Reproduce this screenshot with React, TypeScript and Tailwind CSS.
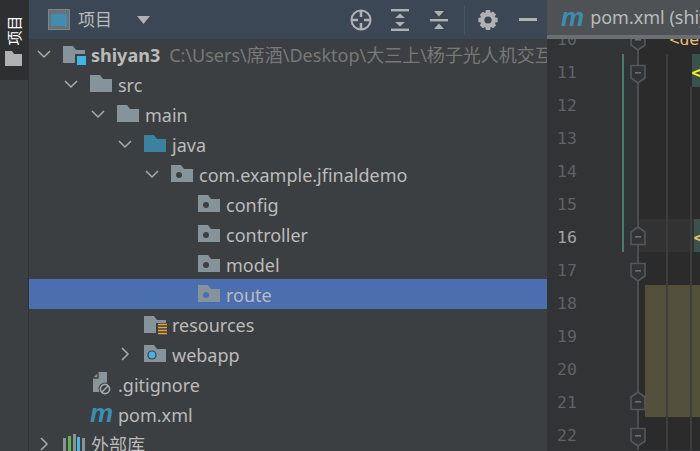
const FONT = "font-['Noto_Sans','Noto_Sans_CJK_SC',sans-serif]";
const MONO = "font-['DejaVu_Sans_Mono',monospace]";

type IconKind =
  | 'root'
  | 'folder'
  | 'java'
  | 'package'
  | 'resources'
  | 'webapp'
  | 'ignore'
  | 'maven'
  | 'library';

type TreeRow = {
  depth: number;
  label: string;
  icon: IconKind;
  open?: boolean;
  closed?: boolean;
  bold?: boolean;
  hint?: string;
  selected?: boolean;
};

const rows: TreeRow[] = [
  { depth: 0, label: 'shiyan3', icon: 'root', open: true, bold: true, hint: 'C:\\Users\\席酒\\Desktop\\大三上\\杨子光人机交互实验' },
  { depth: 1, label: 'src', icon: 'folder', open: true },
  { depth: 2, label: 'main', icon: 'folder', open: true },
  { depth: 3, label: 'java', icon: 'java', open: true },
  { depth: 4, label: 'com.example.jfinaldemo', icon: 'package', open: true },
  { depth: 5, label: 'config', icon: 'package' },
  { depth: 5, label: 'controller', icon: 'package' },
  { depth: 5, label: 'model', icon: 'package' },
  { depth: 5, label: 'route', icon: 'package', selected: true },
  { depth: 3, label: 'resources', icon: 'resources' },
  { depth: 3, label: 'webapp', icon: 'webapp', closed: true },
  { depth: 1, label: '.gitignore', icon: 'ignore' },
  { depth: 1, label: 'pom.xml', icon: 'maven' },
  { depth: 0, label: '外部库', icon: 'library', closed: true },
];

const folderPath = 'M0 0H10L13 4H22V17H0Z';

const MavenM = ({ className }: { className: string }) => (
  <span className={`font-['Liberation_Sans',sans-serif] font-bold italic leading-none text-[#3a8fae] ${className}`}>m</span>
);

const Chevron = ({ open }: { open: boolean }) => (
  <svg width="16" height="16" viewBox="0 0 16 16" fill="none" stroke="#a9abad" strokeWidth="1.5">
    {open ? <path d="M2 5L8 11L14 5" /> : <path d="M5 2L11 8L5 14" />}
  </svg>
);

const TreeIcon = ({ kind, selected }: { kind: IconKind; selected?: boolean }) => {
  if (kind === 'maven') return <MavenM className="-mt-[2px] text-[26px]" />;
  if (kind === 'ignore') {
    return (
      <svg width="24" height="24" viewBox="0 0 24 24" className="-mt-[2px]">
        <path d="M9 1H17V21H3V7Z" fill="#8a949b" />
        <path d="M8 2V7H3" fill="none" stroke="#3c3f41" strokeWidth="1.4" />
        <circle cx="15" cy="18" r="6.4" fill="#3c3f41" />
        <circle cx="15" cy="18" r="4.6" fill="none" stroke="#a3abb0" strokeWidth="1.6" />
        <path d="M12 21L18 15" stroke="#a3abb0" strokeWidth="1.6" />
      </svg>
    );
  }
  if (kind === 'library') {
    return (
      <svg width="23" height="18" viewBox="0 0 23 18" className="-mt-[2px]">
        <rect x="0" y="4" width="3" height="14" fill="#87939a" />
        <rect x="5" y="2" width="3" height="16" fill="#62b543" />
        <rect x="10" y="0" width="3" height="18" fill="#87939a" />
        <rect x="14" y="3" width="3" height="15" fill="#40b6e0" />
        <rect x="19" y="4" width="3" height="14" fill="#87939a" />
      </svg>
    );
  }
  const fill = kind === 'java' ? '#3a829d' : '#87939a';
  return (
    <svg width="24" height="22" viewBox="0 0 24 22" className={kind === 'root' || kind === 'resources' ? 'mt-[2px]' : ''}>
      <path d={folderPath} fill={fill} transform="translate(0 2)" />
      {kind === 'package' && <circle cx="8" cy="12" r="3" fill={selected ? '#4b6eaf' : '#3c3f41'} />}
      {kind === 'webapp' && (
        <>
          <circle cx="8" cy="12" r="4.6" fill="#3c3f41" />
          <circle cx="8" cy="12" r="3.4" fill="#3eb5e5" />
        </>
      )}
      {kind === 'root' && (
        <>
          <rect x="12" y="10" width="11" height="11" fill="#3c3f41" />
          <rect x="14" y="12" width="9" height="9" fill="#3eb5e5" />
        </>
      )}
      {kind === 'resources' && (
        <>
          <rect x="12" y="9" width="12" height="13" fill="#3c3f41" />
          <path d="M14 10.5H23M14 13.5H23M14 16.5H23M14 19.5H23" stroke="#e2a63c" strokeWidth="1.6" />
        </>
      )}
    </svg>
  );
};

const Row = ({ row }: { row: TreeRow }) => (
  <div
    className={`flex h-[30px] shrink-0 items-center overflow-hidden whitespace-nowrap text-[18px] text-[#bbbbbb] ${row.selected ? 'bg-[#4b6eaf]' : ''}`}
    style={{ paddingLeft: 7 + 27 * row.depth }}
  >
    <span className="flex w-[27px] shrink-0 items-center">
      {row.open && <Chevron open />}
      {row.closed && <Chevron open={false} />}
    </span>
    <span className="flex h-[24px] w-[28px] shrink-0 items-center">
      <TreeIcon kind={row.icon} selected={row.selected} />
    </span>
    <span className={`mt-[2px] ${row.bold ? 'font-bold' : ''}`}>{row.label}</span>
    {row.hint && <span className="ml-[9px] mt-[2px] text-[#787878]">{row.hint}</span>}
  </div>
);

const HeaderIcons = () => (
  <div className="flex items-center">
    <svg width="22" height="22" viewBox="0 0 22 22" fill="none" stroke="#afb1b3" strokeWidth="2">
      <circle cx="11" cy="11" r="9.5" />
      <path d="M11 2V8M11 14V20M2 11H8M14 11H20" strokeWidth="2.6" />
    </svg>
    <svg width="18" height="22" viewBox="0 0 18 22" fill="#afb1b3" className="ml-[19px]">
      <rect x="0" y="0" width="18" height="2.4" />
      <rect x="0" y="19.6" width="18" height="2.4" />
      <path d="M9 4.5L14 9H4ZM9 17.5L4 13H14Z" />
    </svg>
    <svg width="18" height="20" viewBox="0 0 18 20" fill="#afb1b3" className="ml-[21px]">
      <rect x="0" y="9" width="18" height="2.4" />
      <path d="M4 1H14L9 6.5ZM4 19H14L9 13.5Z" />
    </svg>
    <span className="ml-[16px] h-[28px] w-px bg-[#4b5562]" />
    <svg width="20" height="20" viewBox="0 0 20 20" className="ml-[13px]">
      <path
        d="M8 0H12L12.6 2.8L15 1.6L18 4.6L16.6 7L19.6 8V12L16.8 12.8L18 15.4L15.2 18.2L12.8 16.8L12 20H8L7.2 16.9L4.8 18.2L1.8 15.2L3.2 12.8L0.4 12V8L3.2 7.2L1.8 4.8L4.8 1.8L7.2 3.1Z"
        fill="#afb1b3"
        fillRule="evenodd"
      />
      <circle cx="10" cy="10" r="3.6" fill="#3b4754" />
    </svg>
    <span className="ml-[21px] h-[3px] w-[18px] bg-[#afb1b3]" />
  </div>
);

type Fold = 'down' | 'up';

const FoldMark = ({ fold }: { fold?: Fold }) => (
  <svg width="16" height="33" viewBox="0 0 16 33" className="shrink-0">
    <rect x="7" y="0" width="2" height="33" fill="#4b4d4f" />
    {fold === 'down' && (
      <>
        <path d="M1 11.5H15V24L8 29L1 24Z" fill="#313335" stroke="#55575a" strokeWidth="1.6" />
        <rect x="5" y="18" width="6" height="1.6" fill="#6a6c6e" />
      </>
    )}
    {fold === 'up' && (
      <>
        <path d="M1 25.5H15V13L8 8L1 13Z" fill="#313335" stroke="#55575a" strokeWidth="1.6" />
        <rect x="5" y="17" width="6" height="1.6" fill="#6a6c6e" />
      </>
    )}
  </svg>
);

type CodeLine = {
  n: number;
  fold?: Fold;
  changed?: boolean;
  current?: boolean;
  marked?: boolean;
  tag?: 'active' | 'current';
  text?: string;
};

const lines: CodeLine[] = [
  { n: 10, fold: 'down', text: '<dependency>' },
  { n: 11, fold: 'down', changed: true, tag: 'active' },
  { n: 12, changed: true },
  { n: 13, changed: true },
  { n: 14, changed: true },
  { n: 15, changed: true },
  { n: 16, fold: 'up', changed: true, current: true, tag: 'current' },
  { n: 17, fold: 'down' },
  { n: 18, marked: true },
  { n: 19, marked: true },
  { n: 20, marked: true },
  { n: 21, fold: 'up', marked: true },
  { n: 22, fold: 'down' },
];

const Guide = () => <span className="h-full w-[2px] shrink-0 bg-[#3d3d3d]" />;

const EditorLine = ({ line }: { line: CodeLine }) => (
  <div className={`flex h-[33px] shrink-0 ${MONO} text-[16.5px] leading-[37px]`}>
    <span className={`w-[75px] shrink-0 pl-[10px] ${line.current ? 'text-[#a4a3a3]' : 'text-[#606366]'}`}>{line.n}</span>
    <span className={`h-full w-[1.5px] shrink-0 ${line.changed ? 'bg-[#4a7a6c]' : ''}`} />
    <span className="relative z-10 -mr-[1px] ml-[6px] flex">
      <FoldMark fold={line.fold} />
    </span>
    <div className={`-ml-[6px] flex min-w-0 flex-1 overflow-hidden whitespace-nowrap ${line.current ? 'bg-[#323232]' : 'bg-[#2b2b2b]'}`}>
      <span className="w-[6px] shrink-0" />
      <div className={`flex h-full flex-1 ${line.marked ? 'bg-[#52503a]' : ''}`}>
        <span className="w-[21px] shrink-0" />
        {line.n > 10 && <Guide />}
        {line.text && <span className="ml-[4px] text-[#e8bf6a]">{line.text}</span>}
        {line.n > 10 && <span className="w-[22px] shrink-0" />}
        {line.n > 11 && <Guide />}
        {line.tag && (
          <span
            className={`ml-[2px] flex-1 font-bold ${line.tag === 'active' ? 'bg-[#3b514d] text-[#ffef28]' : 'bg-[#3b514d] text-[#e8bf6a]'}`}
          >
            &lt;
          </span>
        )}
      </div>
    </div>
  </div>
);

export default function App() {
  return (
    <div className={`flex h-[451px] w-[700px] overflow-hidden bg-[#3c3f41] ${FONT}`}>
      <aside className="flex w-[29px] shrink-0 flex-col border-r border-[#323232]">
        <div className="flex h-[80px] flex-col items-center bg-[#2e2f30]">
          <div className="mt-[15px] flex h-[30px] items-center justify-center">
            <span className="-rotate-90 whitespace-nowrap text-[15px] leading-none text-white">项目</span>
          </div>
          <svg width="18" height="16" viewBox="0 0 18 16" className="mt-[6px]">
            <path d="M0 0H7L9 3H17V15H0Z" fill="#afb1b3" />
          </svg>
        </div>
      </aside>

      <section className="flex w-[518px] shrink-0 flex-col">
        <header className="flex h-[39px] shrink-0 items-center justify-between bg-[#3b4754] pl-[19px] pr-[10px]">
          <div className="flex items-center">
            <svg width="22" height="21" viewBox="0 0 22 21">
              <rect x="0.5" y="0.5" width="21" height="20" fill="#697078" stroke="#7c858d" />
              <rect x="3" y="5" width="16" height="12" fill="#3f8eb0" />
            </svg>
            <span className="ml-[8px] text-[17px] text-[#bbbbbb]">项目</span>
            <svg width="13" height="8" viewBox="0 0 13 8" className="ml-[25px]">
              <path d="M0 0H13L6.5 8Z" fill="#afb1b3" />
            </svg>
          </div>
          <HeaderIcons />
        </header>
        <div className="flex min-h-0 flex-1 flex-col">
          {rows.map((row) => (
            <Row key={row.label} row={row} />
          ))}
        </div>
      </section>

      <main className="flex min-w-0 flex-1 flex-col bg-[#313335]">
        <div className="relative z-20 flex h-[39px] shrink-0 items-center overflow-hidden whitespace-nowrap border-b-[4px] border-[#6b6f73] bg-[#4e5254] pl-[14px]">
          <MavenM className="-mt-[2px] text-[26px]" />
          <span className="ml-[6px] text-[18px] text-[#bbbbbb]">pom.xml (shiyan3)</span>
        </div>
        <div className="-mt-[18px] flex flex-col">
          {lines.map((line) => (
            <EditorLine key={line.n} line={line} />
          ))}
        </div>
      </main>
    </div>
  );
}
